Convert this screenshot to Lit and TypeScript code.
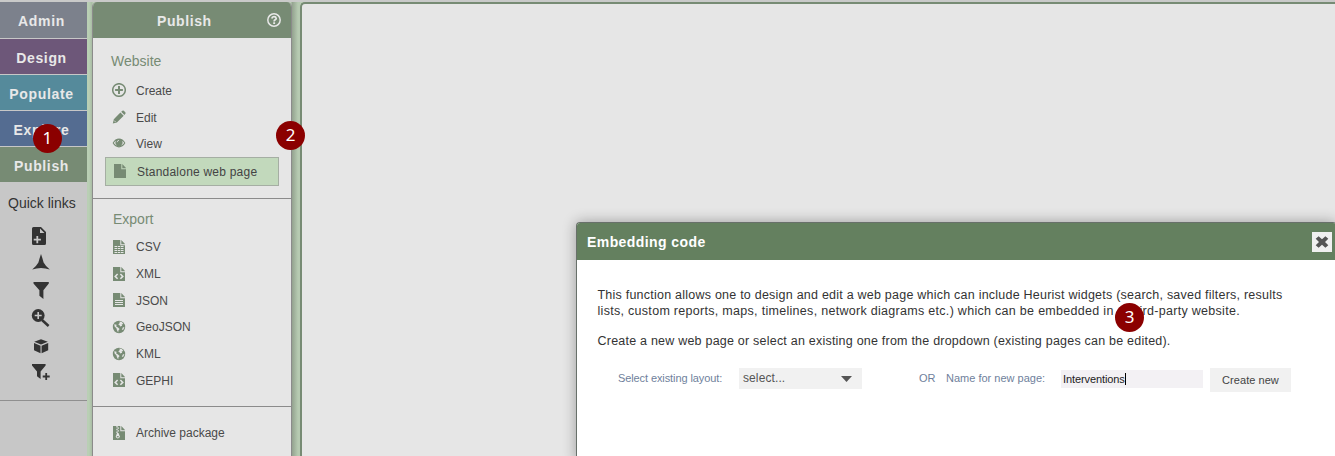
import { LitElement, html, css, svg } from "lit";
import { customElement } from "lit/decorators.js";

const PAGE = "M1 0H8.3V5.2H13V14H1Z M9.3 0L13 3.9V4.3H9.3Z";

const glyphs: Record<string, unknown> = {
  plusCircle: svg`<circle cx="7" cy="7" r="6.3" fill="none" stroke="currentColor" stroke-width="1.5"/><path d="M6 3.1H8V6H10.9V8H8V10.9H6V8H3.1V6H6Z"/>`,
  pencil: svg`<path d="M.8 13.4L1.8 9.3L8.4 2.5L11.7 5.8L4.9 12.4Z M9.2 1.8L10.4 .7Q11.1 .2 11.8 .8L13.3 2.3Q13.9 3 13.4 3.7L12.4 5Z"/><path d="M2.2 10.6L3.6 12" stroke="#e6e6e6" stroke-width=".8"/>`,
  eye: svg`<path fill-rule="evenodd" d="M.6 7Q3.2 2.6 7 2.6T13.4 7Q10.8 11.4 7 11.4T.6 7ZM1.8 7Q4 10.3 7 10.3T12.2 7Q11.4 5.5 10 4.7A3.5 3.5 0 1 1 4 4.7Q2.6 5.5 1.8 7Z"/><path d="M5.1 6.2Q5.3 4.5 7 4.3" fill="none" stroke="#e6e6e6" stroke-width=".8"/>`,
  page: svg`<path d=${PAGE}/>`,
  csv: svg`<path d=${PAGE}/><path d="M2.5 6.5H11.5M2.5 8.5H11.5M2.5 10.5H11.5M2.5 12.5H11.5" stroke="#e6e6e6" stroke-width="1"/><path d="M5.5 6V13M8.5 6V13" stroke="currentColor" stroke-width=".7"/>`,
  code: svg`<path d=${PAGE}/><path d="M5.6 7L3.2 9.4L5.6 11.8M8.4 7L10.8 9.4L8.4 11.8" fill="none" stroke="#e6e6e6" stroke-width="1.5"/>`,
  lines: svg`<path d=${PAGE}/><path d="M3 7.5H11M3 9.5H11M3 11.5H11" stroke="#e6e6e6" stroke-width="1"/>`,
  globe: svg`<circle cx="7" cy="7" r="6.2"/><path d="M2.3 4.2L4.6 4.8L4.2 6.6L6 7.6L7.6 9L6.4 10.6L6.2 12.4L5 10.2L4.4 8.2L2.6 6.6Z M7.4 1.4L9.8 2L11.4 4L9.6 4.4L10.2 5.8L8.2 6.4L7.4 5L6.2 4.4L7.8 3Z M10.8 7.4L12.4 7L11.4 9.6L9.8 10Z" fill="#e6e6e6"/>`,
  zip: svg`<path d=${PAGE}/><path d="M5 0V1.4M6.3 1.4V2.8M5 2.8V4.2M6.3 4.2V5.6M5 5.6V7" stroke="#e6e6e6" stroke-width="1.3"/><path d="M5 7H6.5L7.8 10.6Q7.8 12.4 5.8 12.4T3.8 10.6Z" fill="#e6e6e6"/><ellipse cx="5.8" cy="10.8" rx="1.1" ry=".7"/>`,
  help: svg`<circle cx="7" cy="7" r="6.2" fill="none" stroke="currentColor" stroke-width="1.5"/><path d="M4.8 5.5Q5.1 3.7 7 3.7T9.2 5.4Q9.2 6.3 8 6.9Q7.1 7.3 7.1 8.4" fill="none" stroke="currentColor" stroke-width="1.7"/><path d="M6.2 9.2H8.1V11H6.2Z"/>`,
  close: svg`<path d="M3.6 1.2L7 4.3L10.4 1.2L13.3 3.8L10 7L13.3 10.2L10.4 12.8L7 9.7L3.6 12.8L.7 10.2L4 7L.7 3.8Z"/>`,
};

const quick: Record<string, unknown> = {
  addPage: svg`<path fill-rule="evenodd" d="M2.5 0H10L15 5V16.5Q15 18 13.5 18H2.5Q1 18 1 16.5V1.5Q1 0 2.5 0ZM9 1.5V6H13.5ZM5.4 9V11.7H2.7V13.5H5.4V16.2H7.2V13.5H9.9V11.7H7.2V9Z"/>`,
  arrow: svg`<path d="M10 0Q11.4 4 12.6 8.4Q14.6 12 18.8 15.6Q14.4 14 10 14Q5.6 14 1.2 15.6Q5.4 12 7.4 8.4Q8.6 4 10 0Z"/>`,
  funnel: svg`<path d="M2.5 0H17.8V1.6L12.4 8.2V17L8.4 13.8V8.2L2.5 1.6Z"/>`,
  zoom: svg`<path d="M11 11L17.6 17" stroke="currentColor" stroke-width="2.5"/><circle cx="7.2" cy="6.5" r="6.4"/><path d="M7.2 3V10M3.7 6.5H10.7" stroke="#c7c7c7" stroke-width="1.6"/>`,
  cube: svg`<path d="M10 2.2L16.8 4.8L10 7.6L3.2 4.8Z M3 6L9.5 8.7V16.2L3 13.2Z M10.6 8.7L17.2 6V13.2L10.6 16.2Z"/>`,
  funnelAdd: svg`<path d="M1 0H14.6V1.4L9.6 7.6V15L6 12.2V7.6L1 1.4Z"/><path d="M15.2 9V16M11.7 12.5H18.7" stroke="currentColor" stroke-width="1.8"/>`,
};

const tabs = [
  ["Admin", "admin"], ["Design", "design"], ["Populate", "populate"],
  ["Explore", "explore"], ["Publish", "publish"],
];
const website = [["plusCircle", "Create"], ["pencil", "Edit"], ["eye", "View"]];
const exportsList = [
  ["csv", "CSV"], ["code", "XML"], ["lines", "JSON"],
  ["globe", "GeoJSON"], ["globe", "KML"], ["code", "GEPHI"],
];

@customElement("app-root")
export class AppRoot extends LitElement {
  static styles = css`
    :host { display: block; position: relative; width: 100%; height: 456px; overflow: hidden;
      font-family: "Liberation Sans", Arial, sans-serif; color: #4a4a4a; }
    * { box-sizing: border-box; }
    svg { display: block; fill: currentColor; flex: none; }
    .shell { display: flex; height: 456px; background: #bbcfb6; border-top: 2px solid #c9cac9; }
    .side { width: 87px; background: #c7c7c7; flex: none; }
    .tab { height: 35px; margin-bottom: 1px; line-height: 38px; text-align: center; padding-right: 4px;
      color: #e8e8e8; font-weight: bold; font-size: 14px; letter-spacing: .65px; }
    .admin { background: #7c818c; height: 36px; }
    .design { background: #6d5779; }
    .populate { background: #558a9b; }
    .explore { background: #546c91; }
    .publish { background: #778b74; }
    .quick-title { font-size: 14px; color: #333; height: 42px; line-height: 40px; padding-left: 8px; white-space: nowrap; }
    .quick { display: flex; flex-direction: column; padding: 2px 0 0 31px; gap: 9.4px; color: #333;
      height: 176px; border-bottom: 1px solid #8f8f8f; }
    .menu { width: 200px; margin-left: 5px; flex: none; background: #e6e6e6; border: 1px solid #8b8b8b; border-top: 0; border-bottom: 0;
      border-radius: 5px 5px 0 0; overflow: hidden; }
    .lane { display: flex; width: 213px; flex: none; background: linear-gradient(90deg, #b9cfb4 0 2px, #a9bca5 5px, #bbcfb6 6px, #bbcfb6 204px, #93a28f 205px, #b6cab1 211px); }
    .menu-head { height: 36px; background: #778b74; color: #e8e8e8; display: grid;
      grid-template-columns: 174px auto; align-items: center; font-weight: bold; font-size: 14px; letter-spacing: .6px; }
    .menu-head span { padding-left: 64px; padding-top: 2px; }
    .group { padding: 0 0 0 19px; }
    .group-title { color: #778b74; font-size: 14px; line-height: 16px; }
    .website { height: 161px; padding-top: 15px; border-bottom: 1px solid #8b8b8b; }
    .website .group-title { margin-left: -1px; margin-bottom: 8px; }
    .export { height: 208px; padding-top: 12px; border-bottom: 1px solid #8b8b8b; }
    .export .group-title { margin-bottom: 7px; margin-left: 1px; }
    .archive { padding-top: 13px; }
    .item { display: flex; align-items: center; height: 26.7px; gap: 10px; font-size: 12px; }
    .item svg { color: #778b74; }
    .website .item span { padding-top: 1px; }
    .website .item svg { margin-bottom: 1px; }
    .export .item svg, .archive .item svg { margin-bottom: 1px; }
    .website .item.active span { padding-top: 0; }
    .active { width: 174px; height: 29px; margin: 0 0 0 -7px; padding-left: 7px; background: #c2d9bc; border: 1px solid #a5aea3; color: #444; letter-spacing: .22px; }
    .content { flex: 1; background: #e6e6e6; border: 2px solid #778b74; border-right: 0; border-bottom: 0; border-radius: 5px 0 0 0; }
    .dialog { position: absolute; left: 576px; top: 222px; width: 760px; height: 240px; background: #fff;
      border: 1px solid #68706a; border-right: 0; border-radius: 4px 3px 0 0; box-shadow: 0 0 14px rgba(0,0,0,.32); overflow: hidden; }
    .dialog-head { height: 37px; background: #64805f; color: #fff; display: flex; align-items: center; justify-content: space-between;
      padding: 0 4px 0 10px; font-weight: bold; font-size: 14px; letter-spacing: .42px; }
    .close { width: 20px; height: 20px; background: #f0f0f0; color: #555; display: grid; place-items: center; }
    .body { padding: 27px 0 0 20.5px; font-size: 12.5px; color: #333; line-height: 16px; }
    .line { white-space: nowrap; }
    .gap { margin-top: 14px; }
    .l1 { letter-spacing: .23px; } .l2 { letter-spacing: .295px; } .l3 { letter-spacing: .22px; }
    .form { display: flex; align-items: flex-start; margin-top: 19px; padding-left: 20.5px; font-size: 11px; color: #6f7f9c; white-space: nowrap; }
    .form span { line-height: 21px; }
    .lab1 { width: 121px; letter-spacing: -.1px; }
    .select { width: 123px; height: 21px; background: #f1f1f1; color: #555; font-size: 12px; letter-spacing: .1px; display: flex; align-items: center;
      justify-content: space-between; padding: 0 10px 2px 4px; }
    .select svg { margin-top: 3px; }
    .or { width: 27px; margin-left: 57px; } .lab2 { width: 115px; }
    .input { width: 142px; height: 18px; margin-top: 2px; padding: 0 0 1px 2px; background: #f3f1f4; color: #222; display: flex; align-items: center; letter-spacing: -.1px; }
    .caret { width: 1px; height: 12px; background: #000; }
    .button { width: 81px; height: 24px; margin-left: 7px; background: #f1f1f1; color: #444; font-size: 11px; letter-spacing: .05px; text-align: center; line-height: 25px; }
    .pin { position: absolute; width: 29.7px; height: 29.7px; border-radius: 50%; background: #8b0000; color: #fff;
      font: 17px/28px "Noto Sans", sans-serif; text-align: center; }
    .one { left: 32.6px; top: 123.7px; } .two { left: 275.7px; top: 120.7px; } .three { left: 1114.7px; top: 302.7px; }
  `;

  private item(icon: string, label: string, extra = "") {
    return html`<div class="item ${extra}"><svg width="14" height="14" viewBox="0 0 14 14">${glyphs[icon]}</svg><span>${label}</span></div>`;
  }

  render() {
    return html`
      <div class="shell">
        <nav class="side">
          ${tabs.map(([label, cls]) => html`<div class="tab ${cls}">${label}</div>`)}
          <div class="quick-title">Quick links</div>
          <div class="quick">
            ${Object.values(quick).map((g) => html`<svg width="19" height="18" viewBox="0 0 19 18">${g}</svg>`)}
          </div>
        </nav>
        <div class="lane">
          <section class="menu">
            <div class="menu-head"><span>Publish</span><svg width="14" height="14" viewBox="0 0 14 14">${glyphs.help}</svg></div>
            <div class="group website">
              <div class="group-title">Website</div>
              ${website.map(([i, t]) => this.item(i, t))}
              ${this.item("page", "Standalone web page", "active")}
            </div>
            <div class="group export">
              <div class="group-title">Export</div>
              ${exportsList.map(([i, t]) => this.item(i, t))}
            </div>
            <div class="group archive">${this.item("zip", "Archive package")}</div>
          </section>
        </div>
        <main class="content"></main>
      </div>
      <section class="dialog">
        <div class="dialog-head"><span>Embedding code</span>
          <div class="close"><svg width="14" height="14" viewBox="0 0 14 14">${glyphs.close}</svg></div></div>
        <div class="body">
          <div class="line l1">This function allows one to design and edit a web page which can include Heurist widgets (search, saved filters, results</div>
          <div class="line l2">lists, custom reports, maps, timelines, network diagrams etc.) which can be embedded in a third-party website.</div>
          <div class="line l3 gap">Create a new web page or select an existing one from the dropdown (existing pages can be edited).</div>
          <div class="form">
            <span class="lab1">Select existing layout:</span>
            <div class="select">select...<svg width="11" height="6" viewBox="0 0 11 6"><path d="M0 0H11L5.5 6Z"/></svg></div>
            <span class="or">OR</span><span class="lab2">Name for new page:</span>
            <div class="input">Interventions<i class="caret"></i></div>
            <div class="button">Create new</div>
          </div>
        </div>
      </section>
      <div class="pin one">1</div><div class="pin two">2</div><div class="pin three">3</div>
    `;
  }
}
